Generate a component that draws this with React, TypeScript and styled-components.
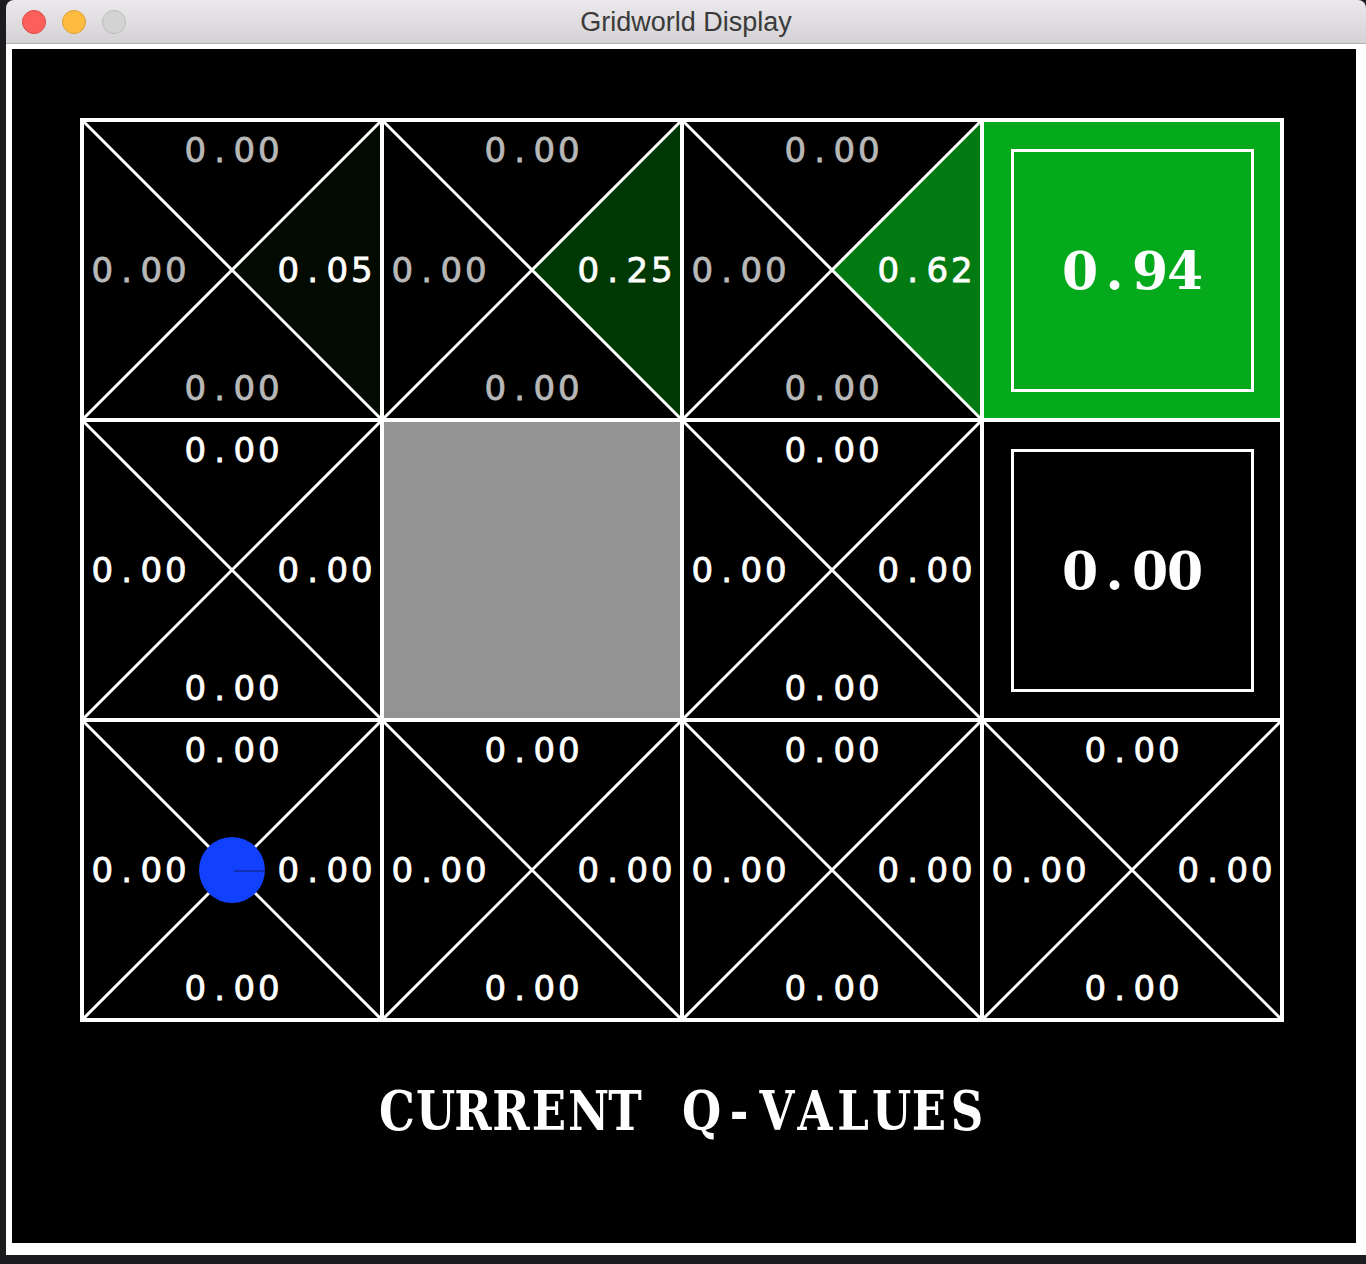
import styled, { createGlobalStyle } from "styled-components";

const GlobalStyle = createGlobalStyle`
  html, body {
    margin: 0;
    padding: 0;
    background: #1c1b1d;
  }
`;

type Dir = "n" | "s" | "e" | "w";

type QCell = {
  kind: "q";
  values: Record<Dir, string>;
  fills?: Partial<Record<Dir, string>>;
  muted?: Dir[];
  agent?: boolean;
};
type TerminalCell = { kind: "terminal"; value: string; fill: string };
type WallCell = { kind: "wall" };
type CellData = QCell | TerminalCell | WallCell;

const zeros = { n: "0.00", s: "0.00", e: "0.00", w: "0.00" };

const grid: CellData[][] = [
  [
    { kind: "q", values: { ...zeros, e: "0.05" }, fills: { e: "#020a02" }, muted: ["n", "s", "w"] },
    { kind: "q", values: { ...zeros, e: "0.25" }, fills: { e: "#003804" }, muted: ["n", "s", "w"] },
    { kind: "q", values: { ...zeros, e: "0.62" }, fills: { e: "#047a12" }, muted: ["n", "s", "w"] },
    { kind: "terminal", value: "0.94", fill: "#04aa1c" },
  ],
  [
    { kind: "q", values: zeros },
    { kind: "wall" },
    { kind: "q", values: zeros },
    { kind: "terminal", value: "0.00", fill: "#000" },
  ],
  [
    { kind: "q", values: zeros, agent: true },
    { kind: "q", values: zeros },
    { kind: "q", values: zeros },
    { kind: "q", values: zeros },
  ],
];

// triangles meet at the cell centre, one per action
const triangles: Record<Dir, string> = {
  n: "148,148 0,0 296,0",
  s: "148,148 0,296 296,296",
  e: "148,148 296,0 296,296",
  w: "148,148 0,0 0,296",
};

// fixed-pitch text (the canvas font is a typewriter face with a plain zero)
const Pitched = ({ text, pitch }: { text: string; pitch: number }) => (
  <>
    {text.split("").map((ch, i) => (
      <Glyph key={i} $pitch={pitch}>
        {ch}
      </Glyph>
    ))}
  </>
);

const QCellView = ({ cell }: { cell: QCell }) => {
  const muted = cell.muted ?? [];
  return (
    <Cell>
      <Drawing viewBox="0 0 296 296">
        {(Object.keys(cell.fills ?? {}) as Dir[]).map((d) => (
          <polygon key={d} points={triangles[d]} fill={cell.fills![d]} />
        ))}
        <line x1={-2} y1={-2} x2={298} y2={298} stroke="#fff" strokeWidth={3} />
        <line x1={298} y1={-2} x2={-2} y2={298} stroke="#fff" strokeWidth={3} />
        {cell.agent && (
          <>
            <circle cx={148} cy={148} r={33} fill="#1141fc" />
            <line x1={150} y1={149} x2={181} y2={149} stroke="#101c70" strokeWidth={1} />
          </>
        )}
      </Drawing>
      <QLabels>
        {(["n", "w", "e", "s"] as Dir[]).map((d) => (
          <QLabel key={d} $area={d} $muted={muted.includes(d)}>
            <Pitched text={cell.values[d]} pitch={24.5} />
          </QLabel>
        ))}
      </QLabels>
    </Cell>
  );
};

const CellView = ({ cell }: { cell: CellData }) => {
  if (cell.kind === "wall") return <Wall />;
  if (cell.kind === "terminal")
    return (
      <Terminal $fill={cell.fill}>
        <ExitBox>
          <BigValue>
            <Pitched text={cell.value} pitch={35} />
          </BigValue>
        </ExitBox>
      </Terminal>
    );
  return <QCellView cell={cell} />;
};

const App = () => {
  return (
    <>
      <GlobalStyle />
      <Desktop>
        <Window>
          <TitleBar>
            <Lights>
              <Light $bg="#fc605c" $border="#de4843" />
              <Light $bg="#fdbc40" $border="#dea034" />
              <Light $bg="#d3d3d3" $border="#bcbcbc" />
            </Lights>
            <Title>Gridworld Display</Title>
          </TitleBar>
          <Frame>
            <Canvas>
              <Board>
                {grid.flatMap((row, r) =>
                  row.map((cell, c) => <CellView key={`${r}-${c}`} cell={cell} />)
                )}
              </Board>
              <Caption>
                <Pitched text="CURRENT Q-VALUES" pitch={38} />
              </Caption>
            </Canvas>
          </Frame>
        </Window>
      </Desktop>
    </>
  );
};

const Desktop = styled.div`
  width: 1366px;
  height: 1264px;
  overflow: hidden;
  background: #1c1b1d;
  padding-left: 6px;
  box-sizing: border-box;
`;

const Window = styled.div`
  width: 1360px;
  display: flex;
  flex-direction: column;
`;

const TitleBar = styled.div`
  position: relative;
  height: 43px;
  border-radius: 8px 8px 0 0;
  background: linear-gradient(#ebe9eb, #d4d2d4);
  border-bottom: 1px solid #b2b0b2;
  display: flex;
  align-items: center;
  justify-content: center;
`;

const Lights = styled.div`
  position: absolute;
  left: 16px;
  top: 10px;
  display: flex;
  gap: 16px;
`;

const Light = styled.div<{ $bg: string; $border: string }>`
  width: 24px;
  height: 24px;
  border-radius: 50%;
  box-sizing: border-box;
  background: ${(p) => p.$bg};
  border: 1px solid ${(p) => p.$border};
`;

const Title = styled.div`
  font-family: "Liberation Sans", Arial, sans-serif;
  font-size: 27px;
  color: #3a3a3a;
  margin-top: 2px;
`;

const Frame = styled.div`
  background: #fff;
  padding: 5px 10px 12px 6px;
`;

const Canvas = styled.div`
  width: 1344px;
  height: 1194px;
  background: #000;
  display: flex;
  flex-direction: column;
  align-items: center;
  padding-top: 69px;
  padding-right: 4px;
  box-sizing: border-box;
`;

const Board = styled.div`
  display: grid;
  grid-template-columns: repeat(4, 296px);
  grid-template-rows: repeat(3, 296px);
  gap: 4px;
  padding: 4px;
  background: #fff;
`;

const Cell = styled.div`
  position: relative;
  background: #000;
`;

const Drawing = styled.svg`
  position: absolute;
  inset: 0;
  width: 296px;
  height: 296px;
  overflow: visible;
`;

const QLabels = styled.div`
  position: relative;
  height: 100%;
  display: grid;
  grid-template-columns: 1fr 1fr;
  grid-template-rows: 57px 1fr 57px;
  grid-template-areas:
    "n n"
    "w e"
    "s s";
`;

const QLabel = styled.div<{ $area: Dir; $muted: boolean }>`
  grid-area: ${(p) => p.$area};
  display: flex;
  font-family: "DejaVu Sans", "Liberation Sans", sans-serif;
  font-size: 34px;
  line-height: 40px;
  color: ${(p) => (p.$muted ? "#b8b8b8" : "#fff")};
  -webkit-text-stroke: 0.8px ${(p) => (p.$muted ? "#b8b8b8" : "#fff")};
  justify-self: ${(p) => (p.$area === "w" ? "start" : p.$area === "e" ? "end" : "center")};
  align-self: ${(p) => (p.$area === "n" ? "start" : p.$area === "s" ? "end" : "center")};
  padding: ${(p) =>
    p.$area === "n"
      ? "8px 0 0"
      : p.$area === "s"
      ? "0 0 10px"
      : p.$area === "w"
      ? "0 0 0 6px"
      : "0 6px 0 0"};
`;

const Glyph = styled.span<{ $pitch: number }>`
  display: inline-block;
  width: ${(p) => p.$pitch}px;
  text-align: center;
`;

const Wall = styled.div`
  background: #939393;
`;

const Terminal = styled.div<{ $fill: string }>`
  background: ${(p) => p.$fill};
  display: flex;
  align-items: center;
  justify-content: center;
`;

const ExitBox = styled.div`
  width: 243px;
  height: 243px;
  box-sizing: border-box;
  border: 3px solid #fff;
  display: flex;
  align-items: center;
  justify-content: center;
`;

const BigValue = styled.div`
  display: flex;
  font-family: "DejaVu Serif", "Liberation Serif", serif;
  font-weight: bold;
  font-size: 52px;
  line-height: 60px;
  margin-top: 2px;
  color: #fff;
`;

const Caption = styled.div`
  display: flex;
  margin-top: 58px;
  font-family: "DejaVu Serif", "Liberation Serif", serif;
  font-weight: bold;
  font-size: 45px;
  line-height: 64px;
  transform: scaleY(1.2);
  color: #fff;
`;

export default App;
